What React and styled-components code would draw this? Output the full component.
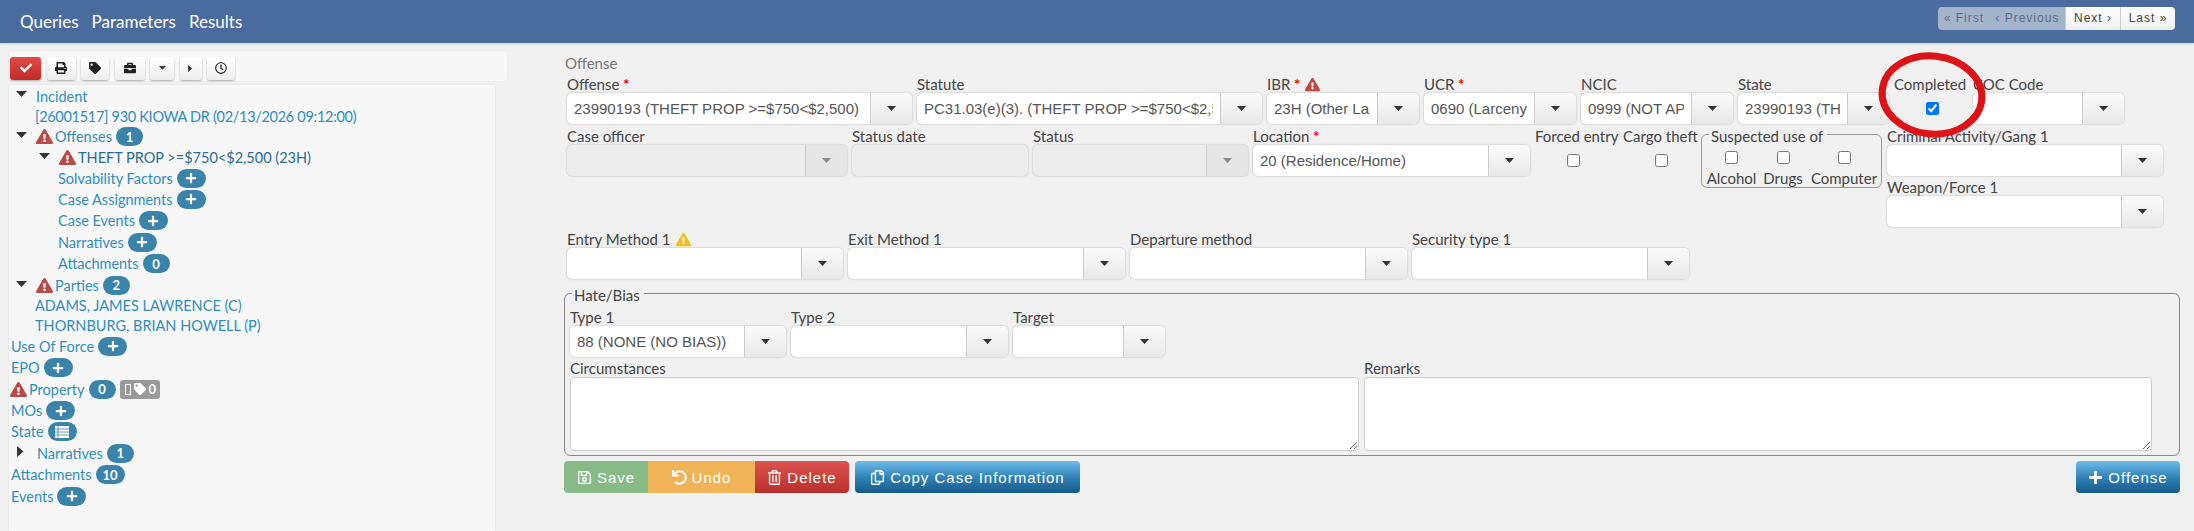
import React from "react";
import styled, { createGlobalStyle } from "styled-components";
import {
  FaCheck,
  FaPrint,
  FaTag,
  FaBriefcase,
  FaRegClock,
  FaExclamationTriangle,
  FaPlus,
  FaRegSave,
  FaUndo,
  FaRegTrashAlt,
  FaRegCopy,
} from "react-icons/fa";

const GlobalStyle = createGlobalStyle`
  html, body {
    margin: 0;
    height: 100%;
    overflow: hidden;
    background: #f0f0f0;
    font-family: "Lato", "Open Sans", "Liberation Sans", sans-serif;
    font-size: 15px;
    color: #444;
  }
`;

const Caret = ({ right, color = "#333", size = 11 }) =>
  right ? (
    <svg width={size * 0.6} height={size} viewBox="0 0 7 12">
      <path d="M0 0 L7 6 L0 12 Z" fill={color} />
    </svg>
  ) : (
    <svg width={size} height={size * 0.55} viewBox="0 0 11 6">
      <path d="M0 0 H11 L5.5 6 Z" fill={color} />
    </svg>
  );

const Combo = ({ label, required, warn, value = "", width, disabled }) => (
  <Field $width={width}>
    <FieldLabel>
      {label}
      {required && <Required> *</Required>}
      {warn && <LabelIcon $color={warn}><FaExclamationTriangle /></LabelIcon>}
    </FieldLabel>
    <ComboBox $disabled={disabled}>
      <ComboInput readOnly disabled={disabled} value={value} />
      <ComboArrow $disabled={disabled}>
        <Caret size={9} color={disabled ? "#888" : "#333"} />
      </ComboArrow>
    </ComboBox>
  </Field>
);

const TreeItem = ({ indent = 0, caret, warn, text, dark, plain, tight, children }) => (
  <TreeRow $indent={indent} $plain={plain}>
    {caret && (
      <CaretSlot>
        <Caret right={caret === "right"} />
      </CaretSlot>
    )}
    {warn && (
      <WarnIcon>
        <FaExclamationTriangle />
      </WarnIcon>
    )}
    <TreeLink $dark={dark} $tight={tight}>{text}</TreeLink>
    {children}
  </TreeRow>
);

const Plus = () => (
  <Badge $wide>
    <FaPlus />
  </Badge>
);

export default function App() {
  return (
    <>
      <GlobalStyle />
      <Header>
        <Nav>
          <NavItem>Queries</NavItem>
          <NavItem>Parameters</NavItem>
          <NavItem>Results</NavItem>
        </Nav>
        <Pager>
          <PagerButton $disabled $width={127}>
            <span>« First</span>
            <span>‹ Previous</span>
          </PagerButton>
          <PagerButton $width={55}>Next ›</PagerButton>
          <PagerButton $width={55}>Last »</PagerButton>
        </Pager>
      </Header>

      <Content>
        <Sidebar>
          <Toolbar>
            <ToolButton $danger $width={31}><FaCheck /></ToolButton>
            <ToolButton $width={29}><FaPrint /></ToolButton>
            <ToolButton $width={28}><FaTag /></ToolButton>
            <ToolButton $width={30}><FaBriefcase /></ToolButton>
            <ToolButton $width={24}><Caret size={7} /></ToolButton>
            <ToolButton $width={22}><Caret right size={7} /></ToolButton>
            <ToolButton $width={28}><FaRegClock /></ToolButton>
          </Toolbar>
          <Tree>
            <TreeItem indent={7} caret="down" text="Incident" plain />
            <TreeItem indent={26} text="[26001517] 930 KIOWA DR (02/13/2026 09:12:00)" plain tight />
            <TreeItem indent={7} caret="down" warn text="Offenses">
              <Badge>1</Badge>
            </TreeItem>
            <TreeItem indent={30} caret="down" warn text="THEFT PROP >=$750<$2,500 (23H)" dark plain />
            <TreeItem indent={49} text="Solvability Factors"><Plus /></TreeItem>
            <TreeItem indent={49} text="Case Assignments"><Plus /></TreeItem>
            <TreeItem indent={49} text="Case Events"><Plus /></TreeItem>
            <TreeItem indent={49} text="Narratives"><Plus /></TreeItem>
            <TreeItem indent={49} text="Attachments"><Badge>0</Badge></TreeItem>
            <TreeItem indent={7} caret="down" warn text="Parties">
              <Badge>2</Badge>
            </TreeItem>
            <TreeItem indent={26} text="ADAMS, JAMES LAWRENCE (C)" plain />
            <TreeItem indent={26} text="THORNBURG, BRIAN HOWELL (P)" plain />
            <TreeItem indent={2} text="Use Of Force"><Plus /></TreeItem>
            <TreeItem indent={2} text="EPO"><Plus /></TreeItem>
            <TreeItem indent={1} warn text="Property">
              <Badge>0</Badge>
              <GreyTag>
                <MissingGlyph />
                <FaTag />
                0
              </GreyTag>
            </TreeItem>
            <TreeItem indent={2} text="MOs"><Plus /></TreeItem>
            <TreeItem indent={2} text="State">
              <Badge $wide>
                <svg width="14" height="12" viewBox="0 0 14 12">
                  <path d="M0 0H14V12H0Z" fill="#fff" />
                  <path d="M0 3H14M0 6H14M0 9H14M3 0V12" stroke="#3a84ab" strokeWidth="0.8" />
                </svg>
              </Badge>
            </TreeItem>
            <TreeItem indent={8} caret="right" text="Narratives"><Badge>1</Badge></TreeItem>
            <TreeItem indent={2} text="Attachments"><Badge>10</Badge></TreeItem>
            <TreeItem indent={2} text="Events"><Plus /></TreeItem>
          </Tree>
        </Sidebar>

        <Main>
          <Title>Offense</Title>

          <FormRow>
            <Combo label="Offense" required width={345} value="23990193 (THEFT PROP >=$750<$2,500)" />
            <Combo label="Statute" width={345} value="PC31.03(e)(3). (THEFT PROP >=$750<$2,500)" />
            <Combo label="IBR" required warn="#b94a48" width={152} value="23H (Other Larceny)" />
            <Combo label="UCR" required width={152} value="0690 (Larceny)" />
            <Combo label="NCIC" width={152} value="0999 (NOT APPLICABLE)" />
            <Combo label="State" width={151} value="23990193 (THEFT)" />
            <CheckField $width={74}>
              <FieldLabel>Completed</FieldLabel>
              <FieldCheck type="checkbox" checked readOnly />
            </CheckField>
            <Combo label="COC Code" width={151} />
          </FormRow>

          <FormRow>
            <Combo label="Case officer" width={280} disabled />
            <Field $width={176}>
              <FieldLabel>Status date</FieldLabel>
              <PlainInput disabled />
            </Field>
            <Combo label="Status" width={215} disabled />
            <Combo label="Location" required width={277} value="20 (Residence/Home)" />
            <CheckGroup>
              <CheckField $width={88}>
                <FieldLabel>Forced entry</FieldLabel>
                <FieldCheck type="checkbox" />
              </CheckField>
              <CheckField $width={73}>
                <FieldLabel>Cargo theft</FieldLabel>
                <FieldCheck type="checkbox" />
              </CheckField>
            </CheckGroup>
            <SuspectedSet>
              <SetLegend>Suspected use of</SetLegend>
              <SuspectedRow>
                <SuspectedItem $width={49}><input type="checkbox" />Alcohol</SuspectedItem>
                <SuspectedItem $width={44}><input type="checkbox" />Drugs</SuspectedItem>
                <SuspectedItem $width={68}><input type="checkbox" />Computer</SuspectedItem>
              </SuspectedRow>
            </SuspectedSet>
            <StackColumn>
              <Combo label="Criminal Activity/Gang 1" width={276} />
              <Combo label="Weapon/Force 1" width={276} />
            </StackColumn>
          </FormRow>

          <FormRow>
            <Combo label="Entry Method 1" warn="#f0c020" width={276} />
            <Combo label="Exit Method 1" width={277} />
            <Combo label="Departure method" width={277} />
            <Combo label="Security type 1" width={277} />
          </FormRow>

          <HateSet>
            <SetLegend>Hate/Bias</SetLegend>
            <HateRow>
              <Combo label="Type 1" width={216} value="88 (NONE (NO BIAS))" />
              <Combo label="Type 2" width={217} />
              <Combo label="Target" width={152} />
            </HateRow>
            <HateRow>
              <Field $width={789}>
                <FieldLabel>Circumstances</FieldLabel>
                <NoteArea />
              </Field>
              <Field $width={788}>
                <FieldLabel>Remarks</FieldLabel>
                <NoteArea />
              </Field>
            </HateRow>
          </HateSet>

          <Actions>
            <ActionGroup>
              <ActionButton $kind="save" $width={84}><FaRegSave /> Save</ActionButton>
              <ActionButton $kind="undo" $width={107}><FaUndo /> Undo</ActionButton>
              <ActionButton $kind="delete" $width={94}><FaRegTrashAlt /> Delete</ActionButton>
              <ActionButton $kind="primary" $width={225} $round><FaRegCopy /> Copy Case Information</ActionButton>
            </ActionGroup>
            <ActionButton $kind="primary" $width={104} $round><FaPlus /> Offense</ActionButton>
          </Actions>
        </Main>
      </Content>

      <Circle width="116" height="96" viewBox="0 0 116 96">
        <ellipse cx="58" cy="48" rx="50" ry="39" fill="none" stroke="#dd1318" strokeWidth="7" transform="rotate(6 58 48)" />
      </Circle>
    </>
  );
}

const Header = styled.header`
  height: 43px;
  background: #4a6b9e;
  display: flex;
  align-items: center;
  justify-content: space-between;
  padding: 0 19px 0 20px;
  box-shadow: 0 1px 2px rgba(0, 0, 0, 0.15);
`;

const Nav = styled.nav`
  display: flex;
  gap: 13px;
`;

const NavItem = styled.span`
  color: #fff;
  font-size: 17px;
`;

const Pager = styled.div`
  display: flex;
  height: 23px;
  margin-top: -7px;
  border-radius: 4px;
  overflow: hidden;
`;

const PagerButton = styled.span`
  width: ${(p) => p.$width}px;
  box-sizing: border-box;
  display: flex;
  align-items: center;
  justify-content: space-around;
  font-family: "Liberation Sans", sans-serif;
  font-size: 12px;
  letter-spacing: 1px;
  color: ${(p) => (p.$disabled ? "#5d6f88" : "#444")};
  background: ${(p) => (p.$disabled ? "#a3b3ca" : "linear-gradient(#fff, #eee)")};
  border-left: ${(p) => (p.$disabled ? "0" : "1px solid #ccc")};
`;

const Content = styled.div`
  display: flex;
  height: 488px;
`;

const Sidebar = styled.aside`
  width: 564px;
  flex: none;
  box-sizing: border-box;
  padding: 8px 0 0 9px;
`;

const Toolbar = styled.div`
  width: 498px;
  height: 30px;
  box-sizing: border-box;
  background: #f7f7f7;
  border-radius: 3px;
  display: flex;
  align-items: center;
  gap: 5.5px;
  padding: 4px 0 0 1px;
  margin-bottom: 4px;
  box-shadow: 0 0 2px rgba(0, 0, 0, 0.06);
`;

const ToolButton = styled.button`
  width: ${(p) => p.$width}px;
  height: 23px;
  padding: 0;
  border: 0;
  border-radius: 3px;
  display: flex;
  align-items: center;
  justify-content: center;
  font-size: 12px;
  color: ${(p) => (p.$danger ? "#fff" : "#222")};
  background: ${(p) =>
    p.$danger ? "linear-gradient(#e04a48, #c32a28)" : "linear-gradient(#fff, #ececec)"};
  box-shadow: 0 1px 2px rgba(0, 0, 0, 0.3);
`;

const Tree = styled.div`
  width: 486px;
  height: 446px;
  box-sizing: border-box;
  padding-top: 1px;
  background: #f7f7f7;
  box-shadow: 0 0 2px rgba(0, 0, 0, 0.08);
`;

const TreeRow = styled.div`
  height: ${(p) => (p.$plain ? 20 : 21.4)}px;
  display: flex;
  align-items: center;
  padding-left: ${(p) => p.$indent}px;
  white-space: nowrap;
  font-size: 14.5px;
`;

const CaretSlot = styled.span`
  width: 20px;
  flex: none;
  display: flex;
  margin-top: -3px;
`;

const WarnIcon = styled.span`
  display: flex;
  color: #b94a48;
  font-size: 17px;
  margin-right: 2px;
`;

const TreeLink = styled.span`
  color: ${(p) => (p.$dark ? "#2a6d92" : "#2f8dbd")};
  letter-spacing: ${(p) => (p.$tight ? "-0.3px" : "0")};
`;

const Badge = styled.span`
  min-width: ${(p) => (p.$wide ? 29 : 27)}px;
  height: 19px;
  box-sizing: border-box;
  margin-left: 4px;
  padding: 0 7px;
  display: inline-flex;
  align-items: center;
  justify-content: center;
  border-radius: 10px;
  background: #3a84ab;
  color: #fff;
  font-size: 13px;
  font-weight: 700;

  svg {
    font-size: 12px;
  }
`;

const GreyTag = styled.span`
  height: 19px;
  margin-left: 4px;
  padding: 0 4px 0 5px;
  display: inline-flex;
  align-items: center;
  gap: 3px;
  border-radius: 3px;
  background: #999;
  color: #fff;
  font-size: 13px;
  font-weight: 700;

  svg {
    font-size: 12px;
  }
`;

const MissingGlyph = styled.span`
  width: 4px;
  height: 9px;
  border: 1px solid #fff;
`;

const Main = styled.main`
  flex: 1;
  box-sizing: border-box;
  padding: 10px 14px 0 0;
`;

const Title = styled.div`
  line-height: 20px;
  margin: 0 0 2px 1px;
  color: #777;
  font-size: 15px;
`;

const FormRow = styled.div`
  display: flex;
  align-items: flex-start;
  gap: 5px;
  padding-left: 3px;
  margin-bottom: 3px;
`;

const Field = styled.div`
  width: ${(p) => p.$width}px;
  flex: none;
`;

const FieldLabel = styled.div`
  height: 18px;
  line-height: 18px;
  white-space: nowrap;
  display: flex;
  align-items: center;
  color: #444;
`;

const Required = styled.span`
  color: #e00;
  font-weight: 700;
  white-space: pre;
`;

const LabelIcon = styled.span`
  display: flex;
  margin-left: 5px;
  font-size: 15px;
  color: ${(p) => p.$color};
`;

const ComboBox = styled.div`
  height: 31px;
  display: flex;
  box-sizing: border-box;
  border-radius: 5px;
  overflow: hidden;
  background: ${(p) => (p.$disabled ? "#ececec" : "#fff")};
  box-shadow: 0 0 2px rgba(0, 0, 0, 0.3);
`;

const ComboInput = styled.input`
  flex: 1;
  min-width: 0;
  border: 0;
  outline: 0;
  padding: 0 7px;
  background: transparent;
  font-family: "Liberation Sans", sans-serif;
  font-size: 15px;
  color: #555;
`;

const ComboArrow = styled.span`
  width: 41px;
  flex: none;
  display: flex;
  align-items: center;
  justify-content: center;
  border-left: 1px solid #ccc;
  background: ${(p) => (p.$disabled ? "#e6e6e6" : "linear-gradient(#fafafa, #e8e8e8)")};
`;

const PlainInput = styled.input`
  display: block;
  width: 100%;
  height: 31px;
  box-sizing: border-box;
  border: 0;
  border-radius: 5px;
  background: #ececec;
  box-shadow: 0 0 2px rgba(0, 0, 0, 0.3);
`;

const CheckGroup = styled.div`
  display: flex;
`;

const CheckField = styled.div`
  width: ${(p) => p.$width}px;
  flex: none;
`;

const FieldCheck = styled.input`
  display: block;
  margin: 9px 0 0 32px;
`;

const SuspectedSet = styled.fieldset`
  width: 181px;
  flex: none;
  box-sizing: border-box;
  margin: -2px 0 0;
  padding: 0 0 0 5px;
  border: 1px solid #999;
  border-radius: 6px;
`;

const SetLegend = styled.legend`
  padding: 0 4px 0 2px;
  height: 18px;
  line-height: 22px;
  margin-left: 2px;
`;

const SuspectedRow = styled.div`
  display: flex;
  gap: 5px;
`;

const SuspectedItem = styled.label`
  width: ${(p) => p.$width}px;
  flex: none;
  display: flex;
  flex-direction: column;
  align-items: center;
  line-height: 17px;
  white-space: nowrap;

  input {
    margin: 8px 0 6px;
  }
`;

const StackColumn = styled.div`
  display: flex;
  flex-direction: column;
  gap: 2px;
`;

const HateSet = styled.fieldset`
  width: 1616px;
  box-sizing: border-box;
  margin: 5px 0 0;
  padding: 6px 0 2px 5px;
  border: 1px solid #888;
  border-radius: 6px;
`;

const HateRow = styled.div`
  display: flex;
  gap: 5px;
  margin-bottom: 2px;
`;

const NoteArea = styled.textarea`
  display: block;
  width: 100%;
  height: 74px;
  box-sizing: border-box;
  border: 1px solid #ccc;
  border-radius: 4px;
  background: #fff;
  outline: 0;
`;

const Actions = styled.div`
  width: 1616px;
  display: flex;
  justify-content: space-between;
  margin-top: 5px;
`;

const ActionGroup = styled.div`
  display: flex;
`;

const actionBackgrounds = {
  save: "#86bb86",
  undo: "#f0b357",
  delete: "linear-gradient(#dc5350, #b92f2b)",
  primary: "linear-gradient(#6cbdea, #2d7fb4 55%, #155a8a)",
};

const ActionButton = styled.button`
  width: ${(p) => p.$width}px;
  height: 32px;
  padding: 0;
  border: 0;
  color: #fff;
  display: flex;
  align-items: center;
  justify-content: center;
  gap: 5px;
  font-family: "Liberation Sans", sans-serif;
  font-size: 15px;
  letter-spacing: 1px;
  background: ${(p) => actionBackgrounds[p.$kind]};
  border-radius: ${(p) => (p.$round ? "4px" : "0")};
  margin-left: ${(p) => (p.$kind === "primary" ? "6px" : "0")};

  &:first-child {
    border-radius: 4px 0 0 4px;
    margin-left: 0;
  }

  &:nth-child(3) {
    border-radius: 0 4px 4px 0;
  }
`;

const Circle = styled.svg`
  position: absolute;
  left: 1874px;
  top: 47px;
  pointer-events: none;
`;
